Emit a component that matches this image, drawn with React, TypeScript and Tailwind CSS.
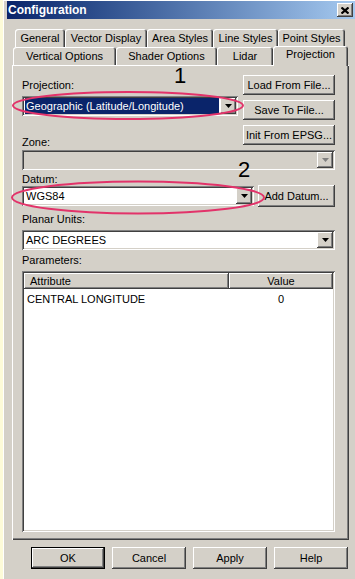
import React from "react";

const raised =
  "bg-[#d4d0c8] shadow-[inset_-1px_-1px_#404040,inset_1px_1px_#ffffff,inset_-2px_-2px_#808080,inset_2px_2px_#d4d0c8]";
const sunken =
  "shadow-[inset_1px_1px_#808080,inset_-1px_-1px_#ffffff,inset_2px_2px_#404040,inset_-2px_-2px_#d4d0c8]";

function Arrow({ disabled = false }: { disabled?: boolean }) {
  return (
    <div className={`${raised} w-[16px] h-[16px] flex items-center justify-center shrink-0`}>
      <svg width="7" height="4" viewBox="0 0 7 4">
        <path d="M0 0h7L3.5 4z" fill={disabled ? "#808080" : "#000"} />
      </svg>
    </div>
  );
}

function Combo({
  value,
  width,
  selected = false,
  disabled = false,
}: {
  value: string;
  width: string;
  selected?: boolean;
  disabled?: boolean;
}) {
  return (
    <div
      className={`${sunken} ${width} h-[20px] p-[2px] flex items-stretch ${
        disabled ? "bg-[#d4d0c8]" : "bg-white"
      }`}
    >
      <div className="flex-1 flex items-center px-[1px] min-w-0">
        <div
          className={`flex-1 h-full flex items-center pl-[1px] whitespace-nowrap ${
            selected ? "bg-[#0a246a] text-white" : "text-black"
          }`}
        >
          {value}
        </div>
      </div>
      <Arrow disabled={disabled} />
    </div>
  );
}

function Btn({ label, className = "" }: { label: string; className?: string }) {
  return (
    <div className={`${raised} flex items-center justify-center whitespace-nowrap ${className}`}>
      {label}
    </div>
  );
}

const tabBase =
  "bg-[#d4d0c8] rounded-t-[3px] shadow-[inset_1px_1px_#ffffff,inset_-1px_0_#404040,inset_-2px_0_#808080] flex items-center justify-center whitespace-nowrap";

export default function App() {
  const row1 = [
    { t: "General", w: "w-[50px]" },
    { t: "Vector Display", w: "w-[82px]" },
    { t: "Area Styles", w: "w-[66px]" },
    { t: "Line Styles", w: "w-[65px]" },
    { t: "Point Styles", w: "w-[67px]" },
  ];
  const row2 = [
    { t: "Vertical Options", w: "w-[103px]" },
    { t: "Shader Options", w: "w-[101px]" },
    { t: "Lidar", w: "w-[56px]" },
  ];

  return (
    <div className="relative w-[355px] h-[579px] overflow-hidden bg-[#fdfbd8] flex font-['Liberation_Sans',Arial,sans-serif] text-[11px] leading-[13px] text-black">
      {/* dialog window */}
      <div className="ml-[3px] flex-1 bg-[#d4d0c8] shadow-[inset_1px_1px_#ffffff] flex flex-col">
        {/* title bar */}
        <div className="mt-[1px] ml-[4px] h-[18px] flex items-center justify-between bg-linear-to-r from-[#0a246a] to-[#a6caf0] pl-[1px] pr-[2px]">
          <span className="text-white font-bold text-[12px]">Configuration</span>
          <div className={`${raised} w-[16px] h-[14px] flex items-center justify-center`}>
            <svg width="8" height="7" viewBox="0 0 8 7">
              <path d="M0.5 0.5l7 6M7.5 0.5l-7 6" stroke="#000" strokeWidth="2.2" />
            </svg>
          </div>
        </div>

        {/* tabs */}
        <div className="mt-[10px] pl-[12px] flex h-[18px]">
          {row1.map((r) => (
            <div key={r.t} className={`${tabBase} ${r.w} h-[18px]`}>
              {r.t}
            </div>
          ))}
        </div>
        <div className="pl-[10px] flex items-end h-[18px] relative z-10">
          {row2.map((r) => (
            <div key={r.t} className={`${tabBase} ${r.w} h-[18px] pt-[1px]`}>
              {r.t}
            </div>
          ))}
          <div className={`${tabBase} w-[75px] h-[20px] -mb-[1px] pb-[3px]`}>Projection</div>
        </div>

        {/* panel */}
        <div className="ml-[9px] w-[337px] h-[475px] shadow-[inset_1px_1px_#ffffff,inset_-1px_-1px_#404040,inset_-2px_-2px_#808080] pl-[10px] pr-[14px] pt-[10px] flex flex-col">
          <div className="flex justify-between">
            <div className="flex flex-col">
              <div className="pt-[4px]">Projection:</div>
              <div className="mt-[4px]">
                <Combo value="Geographic (Latitude/Longitude)" width="w-[216px]" selected />
              </div>
              <div className="mt-[20px]">Zone:</div>
            </div>
            <div className="flex flex-col gap-[5px]">
              <Btn label="Load From File..." className="w-[92px] h-[20px]" />
              <Btn label="Save To File..." className="w-[92px] h-[20px]" />
              <Btn label="Init From EPSG..." className="w-[92px] h-[20px]" />
            </div>
          </div>
          <div className="mt-[1px]">
            <Combo value="" width="w-[313px]" disabled />
          </div>

          <div className="mt-[3px]">Datum:</div>
          <div className="flex items-center justify-between -mt-[1px] h-[22px]">
            <Combo value="WGS84" width="w-[232px]" />
            <Btn label="Add Datum..." className="w-[77px] h-[22px]" />
          </div>

          <div className="mt-[6px]">Planar Units:</div>
          <div className="mt-[4px]">
            <Combo value="ARC DEGREES" width="w-[313px]" />
          </div>

          <div className="mt-[4px]">Parameters:</div>
          <div className={`mt-[4px] w-[313px] h-[261px] bg-white p-[2px] ${sunken}`}>
            <div className="flex h-[16px]">
              <div className={`${raised} w-[205px] flex items-center pl-[6px]`}>Attribute</div>
              <div className={`${raised} w-[104px] flex items-center justify-center`}>Value</div>
            </div>
            <div className="flex h-[16px] items-center mt-[2px]">
              <div className="w-[205px] pl-[3px]">CENTRAL LONGITUDE</div>
              <div className="w-[104px] text-center">0</div>
            </div>
          </div>
        </div>

        {/* dialog buttons */}
        <div className="mt-[7px] pl-[28px] flex gap-[7px]">
          <div className="w-[74px] h-[22px] border border-black">
            <Btn label="OK" className="w-full h-full" />
          </div>
          <Btn label="Cancel" className="w-[74px] h-[22px]" />
          <Btn label="Apply" className="w-[74px] h-[22px]" />
          <Btn label="Help" className="w-[74px] h-[22px]" />
        </div>
      </div>

      {/* hand-drawn annotations */}
      <span className="absolute left-[174px] top-[64px] text-[22px] leading-[24px]">1</span>
      <span className="absolute left-[238px] top-[158px] text-[22px] leading-[24px]">2</span>
      <svg className="absolute left-0 top-0 pointer-events-none" width="355" height="579">
        <ellipse cx="128" cy="105.5" rx="115" ry="13.5" fill="none" stroke="#e2336a" strokeWidth="2" />
        <ellipse cx="138" cy="197.5" rx="126" ry="16" fill="none" stroke="#e2336a" strokeWidth="2" />
      </svg>
    </div>
  );
}
